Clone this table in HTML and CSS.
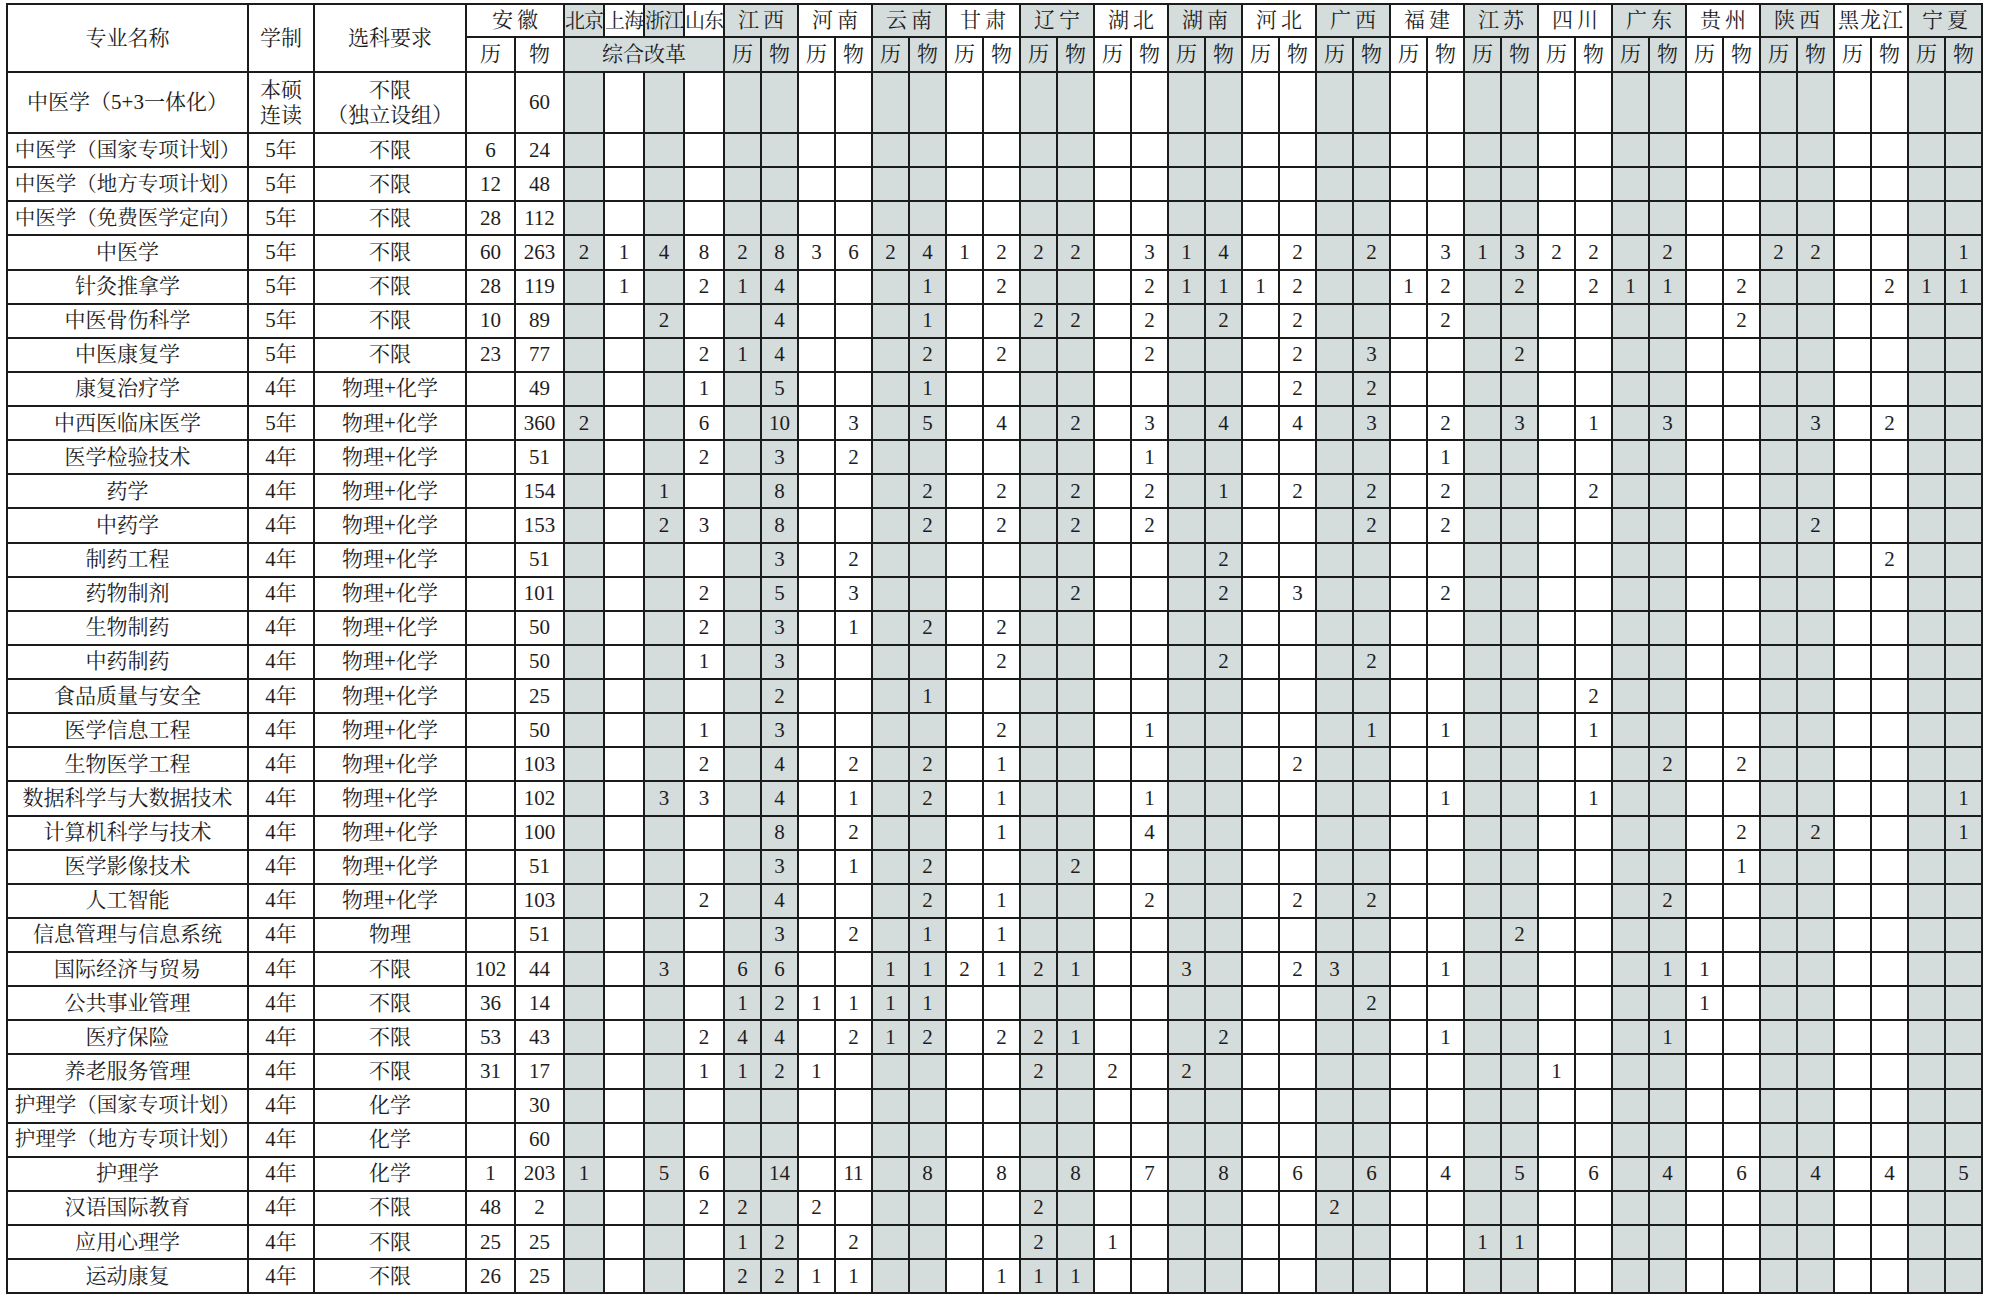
FILE: index.html
```html
<!DOCTYPE html>
<html lang="zh-CN">
<head>
<meta charset="utf-8">
<title>招生计划</title>
<link rel="stylesheet" href="styles.css">
</head>
<body>
<div class="sheet">
<table class="plan">
<colgroup>
<col class="c-name"><col class="c-len"><col class="c-req"><col class="c-ah"><col class="c-ah">
<col class="c-s g"><col class="c-s"><col class="c-s g"><col class="c-s">
<col class="c-p g"><col class="c-p g">
<col class="c-p"><col class="c-p">
<col class="c-p g"><col class="c-p g">
<col class="c-p"><col class="c-p">
<col class="c-p g"><col class="c-p g">
<col class="c-p"><col class="c-p">
<col class="c-p g"><col class="c-p g">
<col class="c-p"><col class="c-p">
<col class="c-p g"><col class="c-p g">
<col class="c-p"><col class="c-p">
<col class="c-p g"><col class="c-p g">
<col class="c-p"><col class="c-p">
<col class="c-p g"><col class="c-p g">
<col class="c-p"><col class="c-p">
<col class="c-p g"><col class="c-p g">
<col class="c-p"><col class="c-p">
<col class="c-p g"><col class="c-p g">
</colgroup>
<thead>
<tr class="h1">
<th rowspan="2">专业名称</th><th rowspan="2">学制</th><th rowspan="2">选科要求</th><th colspan="2" class="pv">安徽</th>
<th class="tt">北京</th><th class="tt">上海</th><th class="tt">浙江</th><th class="tt">山东</th>
<th colspan="2" class="pv">江西</th><th colspan="2" class="pv">河南</th><th colspan="2" class="pv">云南</th><th colspan="2" class="pv">甘肃</th><th colspan="2" class="pv">辽宁</th><th colspan="2" class="pv">湖北</th><th colspan="2" class="pv">湖南</th><th colspan="2" class="pv">河北</th><th colspan="2" class="pv">广西</th><th colspan="2" class="pv">福建</th><th colspan="2" class="pv">江苏</th><th colspan="2" class="pv">四川</th><th colspan="2" class="pv">广东</th><th colspan="2" class="pv">贵州</th><th colspan="2" class="pv">陕西</th><th colspan="2" class="pv3">黑龙江</th><th colspan="2" class="pv">宁夏</th>
</tr>
<tr class="h2">
<th>历</th><th>物</th><th colspan="4" class="gbg">综合改革</th>
<th>历</th><th>物</th><th>历</th><th>物</th><th>历</th><th>物</th><th>历</th><th>物</th><th>历</th><th>物</th><th>历</th><th>物</th><th>历</th><th>物</th><th>历</th><th>物</th><th>历</th><th>物</th><th>历</th><th>物</th><th>历</th><th>物</th><th>历</th><th>物</th><th>历</th><th>物</th><th>历</th><th>物</th><th>历</th><th>物</th><th>历</th><th>物</th><th>历</th><th>物</th>
</tr>
</thead>
<tbody>
<tr class="r1"><td>中医学（5+3一体化）</td><td class="two">本硕<br>连读</td><td class="two">不限<br>（独立设组）</td><td></td><td>60</td>
<td></td><td></td><td></td><td></td>
<td></td><td></td><td></td><td></td><td></td><td></td><td></td><td></td><td></td><td></td><td></td><td></td><td></td><td></td><td></td><td></td><td></td><td></td><td></td><td></td><td></td><td></td><td></td><td></td><td></td><td></td><td></td><td></td><td></td><td></td><td></td><td></td><td></td><td></td></tr>
<tr><td class="lg">中医学（国家专项计划）</td><td>5年</td><td>不限</td><td>6</td><td>24</td>
<td></td><td></td><td></td><td></td>
<td></td><td></td><td></td><td></td><td></td><td></td><td></td><td></td><td></td><td></td><td></td><td></td><td></td><td></td><td></td><td></td><td></td><td></td><td></td><td></td><td></td><td></td><td></td><td></td><td></td><td></td><td></td><td></td><td></td><td></td><td></td><td></td><td></td><td></td></tr>
<tr><td class="lg">中医学（地方专项计划）</td><td>5年</td><td>不限</td><td>12</td><td>48</td>
<td></td><td></td><td></td><td></td>
<td></td><td></td><td></td><td></td><td></td><td></td><td></td><td></td><td></td><td></td><td></td><td></td><td></td><td></td><td></td><td></td><td></td><td></td><td></td><td></td><td></td><td></td><td></td><td></td><td></td><td></td><td></td><td></td><td></td><td></td><td></td><td></td><td></td><td></td></tr>
<tr><td class="lg">中医学（免费医学定向）</td><td>5年</td><td>不限</td><td>28</td><td>112</td>
<td></td><td></td><td></td><td></td>
<td></td><td></td><td></td><td></td><td></td><td></td><td></td><td></td><td></td><td></td><td></td><td></td><td></td><td></td><td></td><td></td><td></td><td></td><td></td><td></td><td></td><td></td><td></td><td></td><td></td><td></td><td></td><td></td><td></td><td></td><td></td><td></td><td></td><td></td></tr>
<tr><td>中医学</td><td>5年</td><td>不限</td><td>60</td><td>263</td>
<td>2</td><td>1</td><td>4</td><td>8</td>
<td>2</td><td>8</td><td>3</td><td>6</td><td>2</td><td>4</td><td>1</td><td>2</td><td>2</td><td>2</td><td></td><td>3</td><td>1</td><td>4</td><td></td><td>2</td><td></td><td>2</td><td></td><td>3</td><td>1</td><td>3</td><td>2</td><td>2</td><td></td><td>2</td><td></td><td></td><td>2</td><td>2</td><td></td><td></td><td></td><td>1</td></tr>
<tr><td>针灸推拿学</td><td>5年</td><td>不限</td><td>28</td><td>119</td>
<td></td><td>1</td><td></td><td>2</td>
<td>1</td><td>4</td><td></td><td></td><td></td><td>1</td><td></td><td>2</td><td></td><td></td><td></td><td>2</td><td>1</td><td>1</td><td>1</td><td>2</td><td></td><td></td><td>1</td><td>2</td><td></td><td>2</td><td></td><td>2</td><td>1</td><td>1</td><td></td><td>2</td><td></td><td></td><td></td><td>2</td><td>1</td><td>1</td></tr>
<tr><td>中医骨伤科学</td><td>5年</td><td>不限</td><td>10</td><td>89</td>
<td></td><td></td><td>2</td><td></td>
<td></td><td>4</td><td></td><td></td><td></td><td>1</td><td></td><td></td><td>2</td><td>2</td><td></td><td>2</td><td></td><td>2</td><td></td><td>2</td><td></td><td></td><td></td><td>2</td><td></td><td></td><td></td><td></td><td></td><td></td><td></td><td>2</td><td></td><td></td><td></td><td></td><td></td><td></td></tr>
<tr><td>中医康复学</td><td>5年</td><td>不限</td><td>23</td><td>77</td>
<td></td><td></td><td></td><td>2</td>
<td>1</td><td>4</td><td></td><td></td><td></td><td>2</td><td></td><td>2</td><td></td><td></td><td></td><td>2</td><td></td><td></td><td></td><td>2</td><td></td><td>3</td><td></td><td></td><td></td><td>2</td><td></td><td></td><td></td><td></td><td></td><td></td><td></td><td></td><td></td><td></td><td></td><td></td></tr>
<tr><td>康复治疗学</td><td>4年</td><td>物理+化学</td><td></td><td>49</td>
<td></td><td></td><td></td><td>1</td>
<td></td><td>5</td><td></td><td></td><td></td><td>1</td><td></td><td></td><td></td><td></td><td></td><td></td><td></td><td></td><td></td><td>2</td><td></td><td>2</td><td></td><td></td><td></td><td></td><td></td><td></td><td></td><td></td><td></td><td></td><td></td><td></td><td></td><td></td><td></td><td></td></tr>
<tr><td>中西医临床医学</td><td>5年</td><td>物理+化学</td><td></td><td>360</td>
<td>2</td><td></td><td></td><td>6</td>
<td></td><td>10</td><td></td><td>3</td><td></td><td>5</td><td></td><td>4</td><td></td><td>2</td><td></td><td>3</td><td></td><td>4</td><td></td><td>4</td><td></td><td>3</td><td></td><td>2</td><td></td><td>3</td><td></td><td>1</td><td></td><td>3</td><td></td><td></td><td></td><td>3</td><td></td><td>2</td><td></td><td></td></tr>
<tr><td>医学检验技术</td><td>4年</td><td>物理+化学</td><td></td><td>51</td>
<td></td><td></td><td></td><td>2</td>
<td></td><td>3</td><td></td><td>2</td><td></td><td></td><td></td><td></td><td></td><td></td><td></td><td>1</td><td></td><td></td><td></td><td></td><td></td><td></td><td></td><td>1</td><td></td><td></td><td></td><td></td><td></td><td></td><td></td><td></td><td></td><td></td><td></td><td></td><td></td><td></td></tr>
<tr><td>药学</td><td>4年</td><td>物理+化学</td><td></td><td>154</td>
<td></td><td></td><td>1</td><td></td>
<td></td><td>8</td><td></td><td></td><td></td><td>2</td><td></td><td>2</td><td></td><td>2</td><td></td><td>2</td><td></td><td>1</td><td></td><td>2</td><td></td><td>2</td><td></td><td>2</td><td></td><td></td><td></td><td>2</td><td></td><td></td><td></td><td></td><td></td><td></td><td></td><td></td><td></td><td></td></tr>
<tr><td>中药学</td><td>4年</td><td>物理+化学</td><td></td><td>153</td>
<td></td><td></td><td>2</td><td>3</td>
<td></td><td>8</td><td></td><td></td><td></td><td>2</td><td></td><td>2</td><td></td><td>2</td><td></td><td>2</td><td></td><td></td><td></td><td></td><td></td><td>2</td><td></td><td>2</td><td></td><td></td><td></td><td></td><td></td><td></td><td></td><td></td><td></td><td>2</td><td></td><td></td><td></td><td></td></tr>
<tr><td>制药工程</td><td>4年</td><td>物理+化学</td><td></td><td>51</td>
<td></td><td></td><td></td><td></td>
<td></td><td>3</td><td></td><td>2</td><td></td><td></td><td></td><td></td><td></td><td></td><td></td><td></td><td></td><td>2</td><td></td><td></td><td></td><td></td><td></td><td></td><td></td><td></td><td></td><td></td><td></td><td></td><td></td><td></td><td></td><td></td><td></td><td>2</td><td></td><td></td></tr>
<tr><td>药物制剂</td><td>4年</td><td>物理+化学</td><td></td><td>101</td>
<td></td><td></td><td></td><td>2</td>
<td></td><td>5</td><td></td><td>3</td><td></td><td></td><td></td><td></td><td></td><td>2</td><td></td><td></td><td></td><td>2</td><td></td><td>3</td><td></td><td></td><td></td><td>2</td><td></td><td></td><td></td><td></td><td></td><td></td><td></td><td></td><td></td><td></td><td></td><td></td><td></td><td></td></tr>
<tr><td>生物制药</td><td>4年</td><td>物理+化学</td><td></td><td>50</td>
<td></td><td></td><td></td><td>2</td>
<td></td><td>3</td><td></td><td>1</td><td></td><td>2</td><td></td><td>2</td><td></td><td></td><td></td><td></td><td></td><td></td><td></td><td></td><td></td><td></td><td></td><td></td><td></td><td></td><td></td><td></td><td></td><td></td><td></td><td></td><td></td><td></td><td></td><td></td><td></td><td></td></tr>
<tr><td>中药制药</td><td>4年</td><td>物理+化学</td><td></td><td>50</td>
<td></td><td></td><td></td><td>1</td>
<td></td><td>3</td><td></td><td></td><td></td><td></td><td></td><td>2</td><td></td><td></td><td></td><td></td><td></td><td>2</td><td></td><td></td><td></td><td>2</td><td></td><td></td><td></td><td></td><td></td><td></td><td></td><td></td><td></td><td></td><td></td><td></td><td></td><td></td><td></td><td></td></tr>
<tr><td>食品质量与安全</td><td>4年</td><td>物理+化学</td><td></td><td>25</td>
<td></td><td></td><td></td><td></td>
<td></td><td>2</td><td></td><td></td><td></td><td>1</td><td></td><td></td><td></td><td></td><td></td><td></td><td></td><td></td><td></td><td></td><td></td><td></td><td></td><td></td><td></td><td></td><td></td><td>2</td><td></td><td></td><td></td><td></td><td></td><td></td><td></td><td></td><td></td><td></td></tr>
<tr><td>医学信息工程</td><td>4年</td><td>物理+化学</td><td></td><td>50</td>
<td></td><td></td><td></td><td>1</td>
<td></td><td>3</td><td></td><td></td><td></td><td></td><td></td><td>2</td><td></td><td></td><td></td><td>1</td><td></td><td></td><td></td><td></td><td></td><td>1</td><td></td><td>1</td><td></td><td></td><td></td><td>1</td><td></td><td></td><td></td><td></td><td></td><td></td><td></td><td></td><td></td><td></td></tr>
<tr><td>生物医学工程</td><td>4年</td><td>物理+化学</td><td></td><td>103</td>
<td></td><td></td><td></td><td>2</td>
<td></td><td>4</td><td></td><td>2</td><td></td><td>2</td><td></td><td>1</td><td></td><td></td><td></td><td></td><td></td><td></td><td></td><td>2</td><td></td><td></td><td></td><td></td><td></td><td></td><td></td><td></td><td></td><td>2</td><td></td><td>2</td><td></td><td></td><td></td><td></td><td></td><td></td></tr>
<tr><td>数据科学与大数据技术</td><td>4年</td><td>物理+化学</td><td></td><td>102</td>
<td></td><td></td><td>3</td><td>3</td>
<td></td><td>4</td><td></td><td>1</td><td></td><td>2</td><td></td><td>1</td><td></td><td></td><td></td><td>1</td><td></td><td></td><td></td><td></td><td></td><td></td><td></td><td>1</td><td></td><td></td><td></td><td>1</td><td></td><td></td><td></td><td></td><td></td><td></td><td></td><td></td><td></td><td>1</td></tr>
<tr><td>计算机科学与技术</td><td>4年</td><td>物理+化学</td><td></td><td>100</td>
<td></td><td></td><td></td><td></td>
<td></td><td>8</td><td></td><td>2</td><td></td><td></td><td></td><td>1</td><td></td><td></td><td></td><td>4</td><td></td><td></td><td></td><td></td><td></td><td></td><td></td><td></td><td></td><td></td><td></td><td></td><td></td><td></td><td></td><td>2</td><td></td><td>2</td><td></td><td></td><td></td><td>1</td></tr>
<tr><td>医学影像技术</td><td>4年</td><td>物理+化学</td><td></td><td>51</td>
<td></td><td></td><td></td><td></td>
<td></td><td>3</td><td></td><td>1</td><td></td><td>2</td><td></td><td></td><td></td><td>2</td><td></td><td></td><td></td><td></td><td></td><td></td><td></td><td></td><td></td><td></td><td></td><td></td><td></td><td></td><td></td><td></td><td></td><td>1</td><td></td><td></td><td></td><td></td><td></td><td></td></tr>
<tr><td>人工智能</td><td>4年</td><td>物理+化学</td><td></td><td>103</td>
<td></td><td></td><td></td><td>2</td>
<td></td><td>4</td><td></td><td></td><td></td><td>2</td><td></td><td>1</td><td></td><td></td><td></td><td>2</td><td></td><td></td><td></td><td>2</td><td></td><td>2</td><td></td><td></td><td></td><td></td><td></td><td></td><td></td><td>2</td><td></td><td></td><td></td><td></td><td></td><td></td><td></td><td></td></tr>
<tr><td>信息管理与信息系统</td><td>4年</td><td>物理</td><td></td><td>51</td>
<td></td><td></td><td></td><td></td>
<td></td><td>3</td><td></td><td>2</td><td></td><td>1</td><td></td><td>1</td><td></td><td></td><td></td><td></td><td></td><td></td><td></td><td></td><td></td><td></td><td></td><td></td><td></td><td>2</td><td></td><td></td><td></td><td></td><td></td><td></td><td></td><td></td><td></td><td></td><td></td><td></td></tr>
<tr><td>国际经济与贸易</td><td>4年</td><td>不限</td><td>102</td><td>44</td>
<td></td><td></td><td>3</td><td></td>
<td>6</td><td>6</td><td></td><td></td><td>1</td><td>1</td><td>2</td><td>1</td><td>2</td><td>1</td><td></td><td></td><td>3</td><td></td><td></td><td>2</td><td>3</td><td></td><td></td><td>1</td><td></td><td></td><td></td><td></td><td></td><td>1</td><td>1</td><td></td><td></td><td></td><td></td><td></td><td></td><td></td></tr>
<tr><td>公共事业管理</td><td>4年</td><td>不限</td><td>36</td><td>14</td>
<td></td><td></td><td></td><td></td>
<td>1</td><td>2</td><td>1</td><td>1</td><td>1</td><td>1</td><td></td><td></td><td></td><td></td><td></td><td></td><td></td><td></td><td></td><td></td><td></td><td>2</td><td></td><td></td><td></td><td></td><td></td><td></td><td></td><td></td><td>1</td><td></td><td></td><td></td><td></td><td></td><td></td><td></td></tr>
<tr><td>医疗保险</td><td>4年</td><td>不限</td><td>53</td><td>43</td>
<td></td><td></td><td></td><td>2</td>
<td>4</td><td>4</td><td></td><td>2</td><td>1</td><td>2</td><td></td><td>2</td><td>2</td><td>1</td><td></td><td></td><td></td><td>2</td><td></td><td></td><td></td><td></td><td></td><td>1</td><td></td><td></td><td></td><td></td><td></td><td>1</td><td></td><td></td><td></td><td></td><td></td><td></td><td></td><td></td></tr>
<tr><td>养老服务管理</td><td>4年</td><td>不限</td><td>31</td><td>17</td>
<td></td><td></td><td></td><td>1</td>
<td>1</td><td>2</td><td>1</td><td></td><td></td><td></td><td></td><td></td><td>2</td><td></td><td>2</td><td></td><td>2</td><td></td><td></td><td></td><td></td><td></td><td></td><td></td><td></td><td></td><td>1</td><td></td><td></td><td></td><td></td><td></td><td></td><td></td><td></td><td></td><td></td><td></td></tr>
<tr><td class="lg">护理学（国家专项计划）</td><td>4年</td><td>化学</td><td></td><td>30</td>
<td></td><td></td><td></td><td></td>
<td></td><td></td><td></td><td></td><td></td><td></td><td></td><td></td><td></td><td></td><td></td><td></td><td></td><td></td><td></td><td></td><td></td><td></td><td></td><td></td><td></td><td></td><td></td><td></td><td></td><td></td><td></td><td></td><td></td><td></td><td></td><td></td><td></td><td></td></tr>
<tr><td class="lg">护理学（地方专项计划）</td><td>4年</td><td>化学</td><td></td><td>60</td>
<td></td><td></td><td></td><td></td>
<td></td><td></td><td></td><td></td><td></td><td></td><td></td><td></td><td></td><td></td><td></td><td></td><td></td><td></td><td></td><td></td><td></td><td></td><td></td><td></td><td></td><td></td><td></td><td></td><td></td><td></td><td></td><td></td><td></td><td></td><td></td><td></td><td></td><td></td></tr>
<tr><td>护理学</td><td>4年</td><td>化学</td><td>1</td><td>203</td>
<td>1</td><td></td><td>5</td><td>6</td>
<td></td><td>14</td><td></td><td>11</td><td></td><td>8</td><td></td><td>8</td><td></td><td>8</td><td></td><td>7</td><td></td><td>8</td><td></td><td>6</td><td></td><td>6</td><td></td><td>4</td><td></td><td>5</td><td></td><td>6</td><td></td><td>4</td><td></td><td>6</td><td></td><td>4</td><td></td><td>4</td><td></td><td>5</td></tr>
<tr><td>汉语国际教育</td><td>4年</td><td>不限</td><td>48</td><td>2</td>
<td></td><td></td><td></td><td>2</td>
<td>2</td><td></td><td>2</td><td></td><td></td><td></td><td></td><td></td><td>2</td><td></td><td></td><td></td><td></td><td></td><td></td><td></td><td>2</td><td></td><td></td><td></td><td></td><td></td><td></td><td></td><td></td><td></td><td></td><td></td><td></td><td></td><td></td><td></td><td></td><td></td></tr>
<tr><td>应用心理学</td><td>4年</td><td>不限</td><td>25</td><td>25</td>
<td></td><td></td><td></td><td></td>
<td>1</td><td>2</td><td></td><td>2</td><td></td><td></td><td></td><td></td><td>2</td><td></td><td>1</td><td></td><td></td><td></td><td></td><td></td><td></td><td></td><td></td><td></td><td>1</td><td>1</td><td></td><td></td><td></td><td></td><td></td><td></td><td></td><td></td><td></td><td></td><td></td><td></td></tr>
<tr><td>运动康复</td><td>4年</td><td>不限</td><td>26</td><td>25</td>
<td></td><td></td><td></td><td></td>
<td>2</td><td>2</td><td>1</td><td>1</td><td></td><td></td><td></td><td>1</td><td>1</td><td>1</td><td></td><td></td><td></td><td></td><td></td><td></td><td></td><td></td><td></td><td></td><td></td><td></td><td></td><td></td><td></td><td></td><td></td><td></td><td></td><td></td><td></td><td></td><td></td><td></td></tr>
</tbody>
</table>
</div>
</body>
</html>
```

FILE: styles.css
```css
html, body {
  margin: 0;
  padding: 0;
  background: #ffffff;
}

.sheet {
  padding: 3px 0 0 6px;
}

.plan {
  border-collapse: collapse;
  table-layout: fixed;
  width: 1977px;
  font-family: "Liberation Serif", "Noto Serif CJK SC", "Noto Sans CJK SC", serif;
  font-size: 21px;
  color: #1d1d1d;
}

.plan th,
.plan td {
  border: 2px solid #1b1b1b;
  padding: 0;
  text-align: center;
  vertical-align: middle;
  white-space: nowrap;
  overflow: visible;
  font-weight: normal;
  line-height: 1;
}

.c-name { width: 241px; }
.c-len { width: 66px; }
.c-req { width: 152px; }
.c-ah { width: 49px; }
.c-s { width: 40px; }
.c-p { width: 37px; }

col.g { background: #d5dcdc; }
.gbg { background: #d5dcdc; }

.plan tr.h1 { height: 33px; }
.plan tr.h2 { height: 35px; }
.plan tr.r1 { height: 61px; }
.plan tbody tr { height: 34.13px; }

.plan th.pv {
  letter-spacing: 4px;
  text-indent: 4px;
}

.plan th.pv3 {
  letter-spacing: 1px;
}

.plan th.tt {
  font-size: 20px;
  letter-spacing: -1px;
}

.plan td.two {
  line-height: 25px;
}

.plan td.lg {
  font-size: 20.5px;
}
```
